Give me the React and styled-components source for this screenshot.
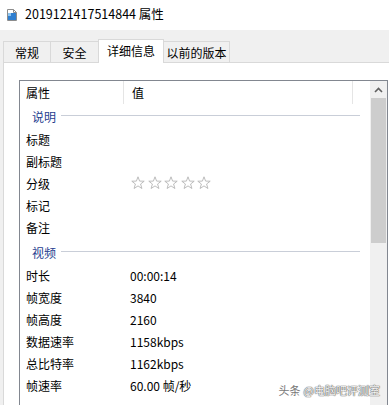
import React from "react";
import styled, { createGlobalStyle } from "styled-components";

const Global = createGlobalStyle`
  html, body { margin: 0; padding: 0; background: #fff; }
  body {
    font-family: "Noto Sans CJK SC", "Noto Sans", sans-serif;
    font-size: 12px;
    color: #000;
  }
`;

const Window = styled.div`
  width: 389px;
  height: 405px;
  overflow: hidden;
  position: relative;
  background: #f0f0f0;
  display: flex;
  flex-direction: column;
`;

const TitleBar = styled.div`
  height: 30px;
  flex-shrink: 0;
  background: #fff;
  display: flex;
  align-items: center;
  padding-left: 7px;
  gap: 8px;
  font-size: 12.5px;
`;

const TitleText = styled.span`
  line-height: 1;
  padding-bottom: 1px;
`;

const TabStrip = styled.div`
  height: 32px;
  flex-shrink: 0;
  display: flex;
  align-items: flex-end;
  padding-left: 3px;
`;

const Tab = styled.div`
  box-sizing: border-box;
  width: ${(p) => p.$w}px;
  height: ${(p) => (p.$active ? 24 : 21)}px;
  margin-left: ${(p) => (p.$first ? 0 : -1)}px;
  margin-bottom: ${(p) => (p.$active ? -1 : 0)}px;
  position: relative;
  z-index: ${(p) => (p.$active ? 1 : 0)};
  background: ${(p) => (p.$active ? "#fff" : "#f0f0f0")};
  border: 1px solid #d9d9d9;
  border-bottom: none;
  display: flex;
  align-items: center;
  justify-content: center;
  padding-bottom: ${(p) => (p.$active ? 3 : 0)}px;
  white-space: nowrap;
`;

const Panel = styled.div`
  flex: 1;
  background: #fff;
  margin-left: 3px;
  border-left: 1px solid #d9d9d9;
  border-top: 1px solid #d9d9d9;
  padding: 17px 0 0 15px;
  display: flex;
`;

const ListBox = styled.div`
  box-sizing: border-box;
  width: 369px;
  height: 400px;
  flex-shrink: 0;
  border: 1px solid #828790;
  display: flex;
`;

const List = styled.div`
  flex: 1;
  display: flex;
  flex-direction: column;
`;

const HeaderRow = styled.div`
  height: 23px;
  display: flex;
  flex-shrink: 0;
`;

const HeaderCell = styled.div`
  box-sizing: border-box;
  width: ${(p) => p.$w}px;
  padding-left: ${(p) => p.$pad}px;
  display: flex;
  align-items: center;
  border-right: 1px solid ${(p) => (p.$sep ? "#e5e5e5" : "transparent")};
`;

const GroupHeader = styled.div`
  height: 24px;
  margin-top: ${(p) => p.$gap}px;
  flex-shrink: 0;
  display: flex;
  align-items: center;
  padding-left: 12px;
  padding-right: 10px;
  gap: 5px;
  color: #1e3d8f;
`;

const GroupLine = styled.div`
  flex: 1;
  height: 1px;
  background: #c9ced8;
  margin-top: -1px;
`;

const Row = styled.div`
  height: 22px;
  flex-shrink: 0;
  display: flex;
  align-items: center;
  padding-left: 6px;
`;

const Label = styled.div`
  width: 104px;
  flex-shrink: 0;
`;

const Value = styled.div`
  display: flex;
  align-items: center;
`;

const Stars = styled.div`
  display: flex;
  gap: 2.5px;
  margin-left: 1px;
`;

const Scrollbar = styled.div`
  width: 17px;
  flex-shrink: 0;
  background: #f0f0f0;
  display: flex;
  flex-direction: column;
`;

const ScrollButton = styled.div`
  height: 17px;
  display: flex;
  align-items: center;
  justify-content: center;
`;

const Thumb = styled.div`
  height: 145px;
  margin: 0 1px;
  background: #cdcdcd;
`;

const Watermark = styled.div`
  position: absolute;
  right: 9px;
  bottom: 7px;
  font-size: 11px;
  color: rgba(255, 255, 255, 0.95);
  text-shadow: 0 0 1px #666, 0 0 1px #666, 0 0 1px #666;
`;

const WmHead = styled.span`
  color: #777;
  text-shadow: none;
  margin-right: 3px;
`;

const FileIcon = () => (
  <svg width="10" height="12" viewBox="0 0 10 12">
    <path d="M0.5 0.5 H6.5 L9.5 3.5 V11.5 H0.5 Z" fill="#fff" stroke="#8c8c8c" />
    <path d="M6.5 0.5 V3.5 H9.5" fill="none" stroke="#8c8c8c" />
    <rect x="1" y="4" width="8" height="7" fill="#2f7fd0" />
    <rect x="1" y="4" width="3" height="3" fill="#8cc4f0" />
  </svg>
);

const Star = () => (
  <svg width="14" height="14" viewBox="0 0 14 14">
    <path
      d="M7 0.8 L8.6 5.1 L13.2 5.2 L9.6 8 L10.9 12.5 L7 9.9 L3.1 12.5 L4.4 8 L0.8 5.2 L5.4 5.1 Z"
      fill="none"
      stroke="#b5b5b5"
      strokeWidth="0.9"
      strokeLinejoin="round"
    />
  </svg>
);

const Chevron = () => (
  <svg width="9" height="6" viewBox="0 0 9 6">
    <path d="M1 5 L4.5 1.5 L8 5" fill="none" stroke="#606060" strokeWidth="1.6" />
  </svg>
);

const tabs = [
  { t: "常规", w: 48 },
  { t: "安全", w: 49 },
  { t: "详细信息", w: 66, active: true },
  { t: "以前的版本", w: 67 },
];

const descRows = [
  { k: "标题" },
  { k: "副标题" },
  { k: "分级", stars: true },
  { k: "标记" },
  { k: "备注" },
];

const videoRows = [
  { k: "时长", v: "00:00:14" },
  { k: "帧宽度", v: "3840" },
  { k: "帧高度", v: "2160" },
  { k: "数据速率", v: "1158kbps" },
  { k: "总比特率", v: "1162kbps" },
  { k: "帧速率", v: "60.00 帧/秒" },
];

const renderRow = (r) => (
  <Row key={r.k}>
    <Label>{r.k}</Label>
    <Value>
      {r.stars ? (
        <Stars>
          {[0, 1, 2, 3, 4].map((i) => (
            <Star key={i} />
          ))}
        </Stars>
      ) : (
        r.v
      )}
    </Value>
  </Row>
);

export default function App() {
  return (
    <>
      <Global />
      <Window>
        <TitleBar>
          <FileIcon />
          <TitleText>2019121417514844 属性</TitleText>
        </TitleBar>
        <TabStrip>
          {tabs.map((tab, i) => (
            <Tab key={tab.t} $w={tab.w} $active={tab.active} $first={i === 0}>
              {tab.t}
            </Tab>
          ))}
        </TabStrip>
        <Panel>
          <ListBox>
            <List>
              <HeaderRow>
                <HeaderCell $w={104} $pad={6} $sep>
                  属性
                </HeaderCell>
                <HeaderCell $w={229} $pad={8} $sep>
                  值
                </HeaderCell>
              </HeaderRow>
              <GroupHeader $gap={0}>
                说明
                <GroupLine />
              </GroupHeader>
              {descRows.map(renderRow)}
              <GroupHeader $gap={2}>
                视频
                <GroupLine />
              </GroupHeader>
              {videoRows.map(renderRow)}
              <GroupHeader $gap={2}>
                音频
                <GroupLine />
              </GroupHeader>
            </List>
            <Scrollbar>
              <ScrollButton>
                <Chevron />
              </ScrollButton>
              <Thumb />
            </Scrollbar>
          </ListBox>
        </Panel>
        <Watermark>
          <WmHead>头条</WmHead>@电脑吧评测室
        </Watermark>
      </Window>
    </>
  );
}
